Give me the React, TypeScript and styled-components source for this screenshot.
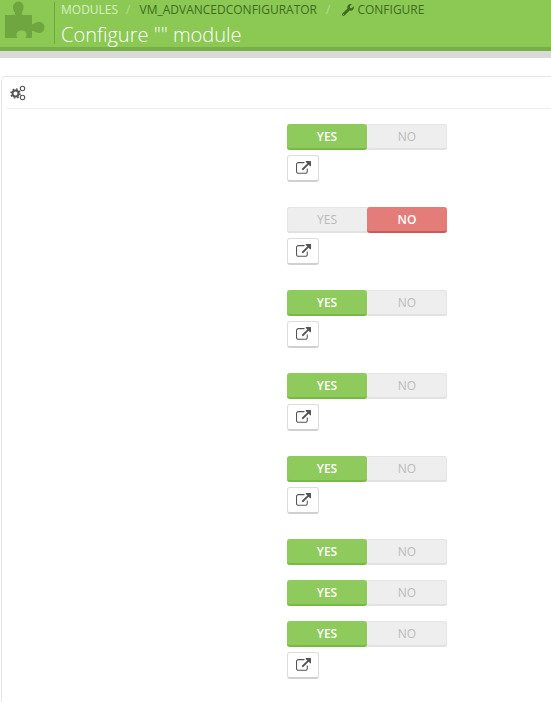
import styled, { createGlobalStyle } from 'styled-components';
import { FaWrench } from 'react-icons/fa';

const GlobalStyle = createGlobalStyle`
  html, body {
    margin: 0;
    padding: 0;
    background: #fff;
    overflow: hidden;
  }
  body {
    font-family: "Open Sans", sans-serif;
    height: 702px;
  }
`;

const PageHead = styled.header`
  height: 47px;
  background: #8bc954;
  border-bottom: 4px solid #77ae47;
  box-sizing: content-box;
  display: flex;
  align-items: stretch;
  overflow: hidden;
`;

const HeadIcon = styled.div`
  width: 54px;
  flex: none;
  color: #6fa63f;
`;

const HeadText = styled.div`
  border-left: 1px solid #6fa63f;
  margin-top: 2px;
  margin-bottom: 3px;
  padding-left: 6px;
`;

const Breadcrumb = styled.div`
  display: flex;
  align-items: center;
  font-size: 12px;
  line-height: 14px;
  height: 14px;
  margin-top: 1px;
  color: #3f6b20;
  white-space: nowrap;
`;

const CrumbMuted = styled.span`
  color: #d9efc6;
`;

const Slash = styled.span<{ $before: number; $after: number }>`
  color: #b9dd9b;
  margin-left: ${(p) => p.$before}px;
  margin-right: ${(p) => p.$after}px;
`;

const WrenchIcon = styled(FaWrench)`
  font-size: 12px;
  margin-right: 3px;
  color: #3f6b20;
`;

const Title = styled.h1`
  margin: 5px 0 0;
  font-size: 20px;
  line-height: 26px;
  font-weight: 300;
  color: #fff;
  white-space: nowrap;
`;

const GreyBar = styled.div`
  height: 7px;
  background: #d9d9d9;
`;

const Panel = styled.section`
  margin: 18px -20px 0 1px;
  height: 626px;
  border: 1px solid #e6e6e6;
  border-bottom: none;
  border-radius: 5px 5px 0 0;
  box-sizing: border-box;
`;

const PanelHead = styled.div`
  height: 31px;
  border-bottom: 1px solid #eee;
  margin-left: 5px;
  padding-left: 3px;
  display: flex;
  align-items: center;
  color: #555;
`;

const FormBody = styled.div`
  padding: 15px 0 0 285px;
  display: flex;
  flex-direction: column;
`;

const Field = styled.div<{ $linked: boolean }>`
  margin-bottom: ${(p) => (p.$linked ? '25px' : '15px')};

  &:last-child {
    margin-bottom: 0;
  }
`;

const Switch = styled.div`
  display: flex;
  width: 160px;
  height: 26px;
  border-radius: 3px;
  background: #eee;
  box-shadow: inset 0 0 0 1px #e5e5e5;
`;

const Option = styled.div<{ $tone?: 'yes' | 'no' }>`
  flex: 1;
  display: flex;
  align-items: center;
  justify-content: center;
  font-size: 12px;
  font-weight: ${(p) => (p.$tone ? 600 : 400)};
  border-radius: 3px;
  color: ${(p) => (p.$tone ? '#fff' : '#bbb')};
  background: ${(p) =>
    p.$tone === 'yes' ? '#8ecb5c' : p.$tone === 'no' ? '#e47c7a' : 'transparent'};
  border-bottom: ${(p) =>
    p.$tone === 'yes'
      ? '2px solid #78b845'
      : p.$tone === 'no'
        ? '2px solid #c95a58'
        : '2px solid #e2e2e2'};
`;

const LinkButton = styled.button`
  display: flex;
  align-items: center;
  justify-content: center;
  width: 32px;
  height: 27px;
  margin-top: 5px;
  padding: 0;
  background: #fff;
  border: 1px solid #ddd;
  border-bottom: 2px solid #d0d0d0;
  border-radius: 3px;
  color: #555;
`;

const PuzzleIcon = () => (
  <svg width="54" height="47" viewBox="0 0 54 47" fill="currentColor" aria-hidden="true">
    <path d="M5 15 H15 C16 13 14 12 13.500 10 C12 6 14 1.500 18.500 1.500 C23 1.500 24.500 6 23 10 C22.500 12 21 13 22.500 15 H32 V24 C33.500 25 35 22 39 22 C42.500 22 44.500 24.500 44.500 27.500 C44.500 30.500 42.500 33 39 33 C35 33 33.500 30 32 31 V38 H25.500 C27 36 27 34 25.500 32 C24 30 19 30 17.500 32 C16 34 16 36 17.500 38 H5 Z" />
  </svg>
);

const CogsIcon = () => (
  <svg width="16" height="16" viewBox="0 0 16 16" fill="none" stroke="currentColor" aria-hidden="true">
    <circle cx="5.500" cy="8.500" r="3" strokeWidth="2" />
    <circle cx="5.500" cy="8.500" r="4.500" strokeWidth="1.500" strokeDasharray="1.700 1.830" />
    <circle cx="12.500" cy="3.500" r="2.200" strokeWidth="1.100" />
    <circle cx="12.500" cy="12.500" r="2.200" strokeWidth="1.100" />
  </svg>
);

const ExternalIcon = () => (
  <svg width="15" height="15" viewBox="0 0 1792 1792" fill="currentColor" aria-hidden="true">
    <path d="M1408 928v320q0 119-84.500 203.500t-203.500 84.500h-832q-119 0-203.500-84.500t-84.500-203.500v-832q0-119 84.500-203.500t203.500-84.500h704q14 0 23 9t9 23v64q0 14-9 23t-23 9h-704q-66 0-113 47t-47 113v832q0 66 47 113t113 47h832q66 0 113-47t47-113v-320q0-14 9-23t23-9h64q14 0 23 9t9 23zm384-864v512q0 26-19 45t-45 19-45-19l-176-176-652 652q-10 10-23 10t-23-10l-114-114q-10-10-10-23t10-23l652-652-176-176q-19-19-19-45t19-45 45-19h512q26 0 45 19t19 45z" />
  </svg>
);

const fields = [
  { on: true, linked: true },
  { on: false, linked: true },
  { on: true, linked: true },
  { on: true, linked: true },
  { on: true, linked: true },
  { on: true, linked: false },
  { on: true, linked: false },
  { on: true, linked: true },
];

export default function App() {
  return (
    <>
      <GlobalStyle />
      <PageHead>
        <HeadIcon>
          <PuzzleIcon />
        </HeadIcon>
        <HeadText>
          <Breadcrumb>
            <CrumbMuted>MODULES</CrumbMuted>
            <Slash $before={8} $after={9}>/</Slash>
            <span>VM_ADVANCEDCONFIGURATOR</span>
            <Slash $before={9} $after={12}>/</Slash>
            <WrenchIcon />
            <span>CONFIGURE</span>
          </Breadcrumb>
          <Title>Configure "" module</Title>
        </HeadText>
      </PageHead>
      <GreyBar />
      <Panel>
        <PanelHead>
          <CogsIcon />
        </PanelHead>
        <FormBody>
          {fields.map((f, i) => (
            <Field key={i} $linked={f.linked}>
              <Switch>
                <Option $tone={f.on ? 'yes' : undefined}>YES</Option>
                <Option $tone={f.on ? undefined : 'no'}>NO</Option>
              </Switch>
              {f.linked && (
                <LinkButton type="button" aria-label="Open">
                  <ExternalIcon />
                </LinkButton>
              )}
            </Field>
          ))}
        </FormBody>
      </Panel>
    </>
  );
}
